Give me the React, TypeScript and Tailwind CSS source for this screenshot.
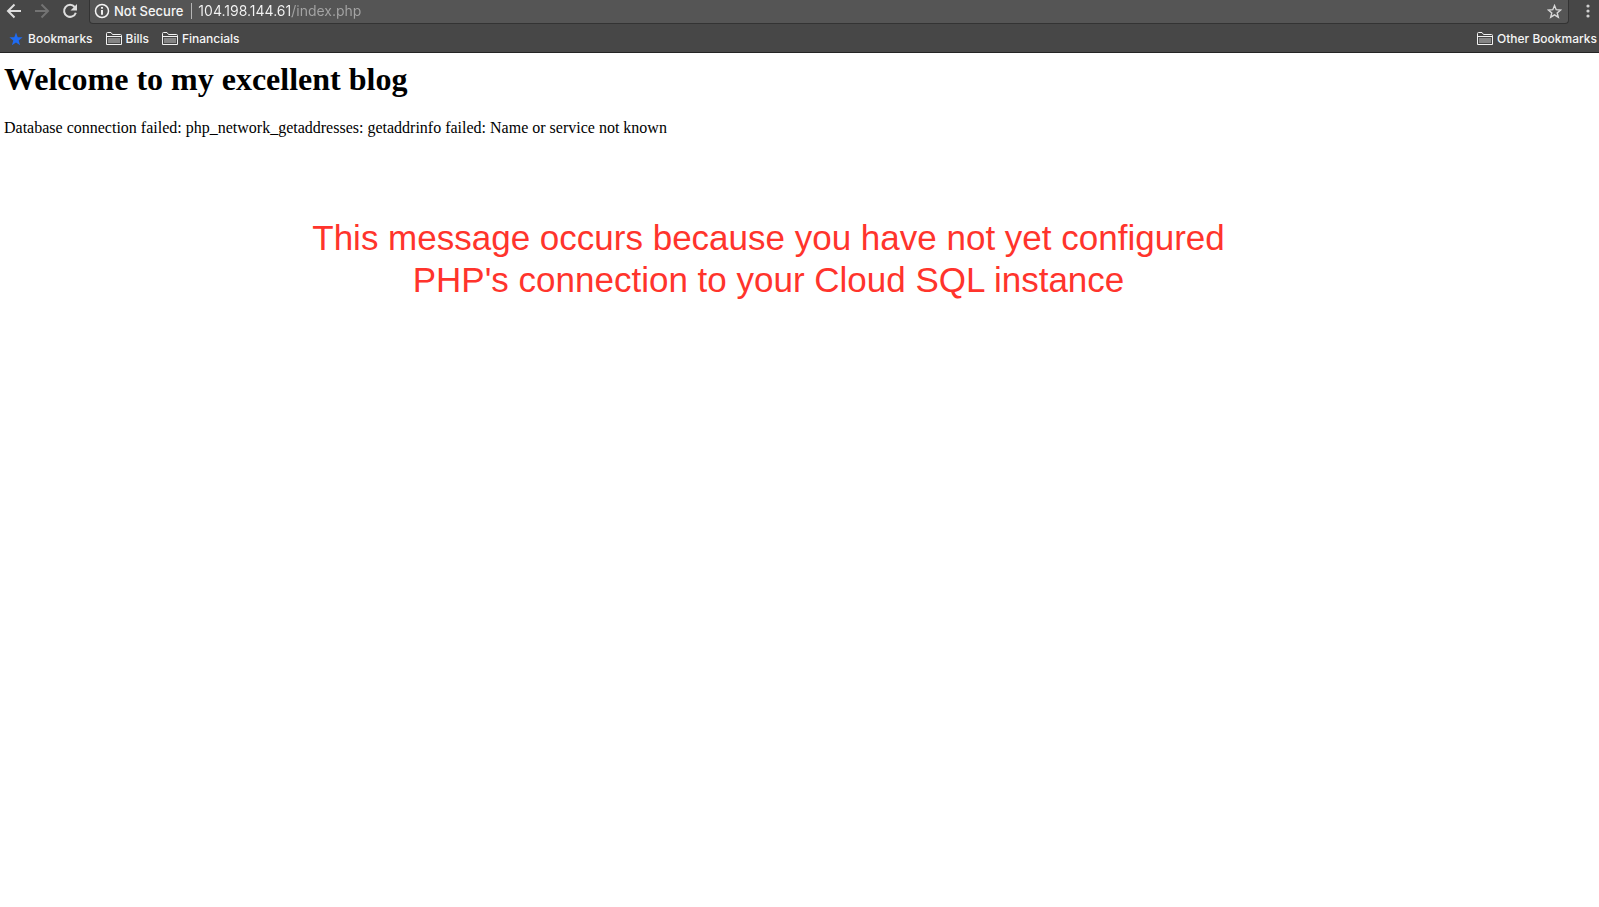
import type { ReactNode } from "react";

function FolderIcon() {
  return (
    <svg width="16" height="14" viewBox="0 0 16 14" fill="none" aria-hidden="true">
      <path d="M.5 12.500V1.500Q.5.5 1.500.5H5l1.500 2h8q1 0 1 1v9z" fill="#474747" stroke="#f2f2f2" />
      <path d="M2 6h12v5H2z" fill="#858585" />
      <path d="M1 4.500h14" stroke="#f2f2f2" />
    </svg>
  );
}

function Bookmark({ icon, children }: { icon: ReactNode; children: ReactNode }) {
  return (
    <button type="button" className="flex items-center gap-1 whitespace-nowrap">
      {icon}
      <span>{children}</span>
    </button>
  );
}

function Toolbar() {
  return (
    <div className="flex h-6 items-start">
      <div className="flex h-[22px] items-center gap-3 pl-1.5 pr-[11px] text-[#dedede]">
        <button type="button" aria-label="Back">
          <svg width="16" height="16" viewBox="0 0 16 16" fill="none" stroke="currentColor" strokeWidth="2">
            <path d="M15 8H2.500M8.500 1.500 2 8l6.500 6.500" />
          </svg>
        </button>
        <button type="button" aria-label="Forward" className="text-[#737373]">
          <svg width="16" height="16" viewBox="0 0 16 16" fill="none" stroke="currentColor" strokeWidth="2">
            <path d="M1 8h12.500M7.500 1.500 14 8l-6.500 6.500" />
          </svg>
        </button>
        <button type="button" aria-label="Reload">
          <svg width="16" height="16" viewBox="0 0 16 16" fill="none">
            <path d="M12.700 4A6 6 0 1 0 13.800 9.700" stroke="currentColor" strokeWidth="2" />
            <path d="M15 1v6.500H8.500z" fill="currentColor" />
          </svg>
        </button>
      </div>
      <div className="flex h-6 min-w-0 flex-1 items-start rounded-b-sm border-x border-b border-[#333] bg-[#555] pl-1 pr-1.5">
        <div className="flex h-[22px] min-w-0 flex-1 items-center text-sm">
          <button type="button" className="flex shrink-0 items-center gap-1 text-[13px] font-medium text-[#f5f5f5]">
            <svg width="16" height="16" viewBox="0 0 15 15" fill="none" aria-hidden="true">
              <circle cx="7.500" cy="7.500" r="6.100" stroke="currentColor" strokeWidth="1.400" />
              <path d="M7.500 6.500V11M7.500 3.800v1.600" stroke="currentColor" strokeWidth="1.800" />
            </svg>
            <span>Not Secure</span>
          </button>
          <span className="ml-2 mr-1.5 h-4 w-px shrink-0 bg-[#b5b5b5]" />
          <input
            aria-label="Address"
            type="text"
            defaultValue="104.198.144.61/index.php"
            className="h-5 min-w-0 flex-1 bg-linear-to-r from-[#f5f5f5] from-[94px] to-[#a5a5a5] to-[94px] bg-clip-text text-transparent outline-none"
          />
        </div>
        <button type="button" aria-label="Bookmark this page" className="flex h-[22px] items-center text-[#d8d8d8]">
          <svg width="15" height="15" viewBox="0 0 15 15" fill="none" stroke="currentColor" strokeWidth="1.400">
            <path d="m7.500 1.600 1.700 4.100 4.400.3-3.400 2.900 1.100 4.300-3.800-2.400-3.800 2.400 1.100-4.300L1.400 6l4.400-.3z" />
          </svg>
        </button>
      </div>
      <button type="button" aria-label="Menu" className="flex h-[22px] w-[30px] items-center justify-center pl-2 text-[#d0d0d0]">
        <svg width="4" height="14" viewBox="0 0 4 14" fill="currentColor">
          <circle cx="2" cy="2" r="1.600" />
          <circle cx="2" cy="7" r="1.600" />
          <circle cx="2" cy="12" r="1.600" />
        </svg>
      </button>
    </div>
  );
}

function BookmarksBar() {
  return (
    <div className="flex h-7 items-center justify-between pl-2 pr-0.5 pt-0.5 text-xs font-medium text-[#f5f5f5]">
      <div className="flex items-center gap-[13px]">
        <Bookmark
          icon={
            <svg width="16" height="16" viewBox="0 0 16 16" fill="#1f6bf2" aria-hidden="true">
              <path d="m8 1.500 1.700 4.700 4.900.1-3.900 3.100 1.400 4.900L8 11.500l-4.100 2.800 1.400-4.900L1.400 6.300l4.900-.1z" />
            </svg>
          }
        >
          Bookmarks
        </Bookmark>
        <Bookmark icon={<FolderIcon />}>Bills</Bookmark>
        <Bookmark icon={<FolderIcon />}>Financials</Bookmark>
      </div>
      <Bookmark icon={<FolderIcon />}>Other Bookmarks</Bookmark>
    </div>
  );
}

export default function App() {
  return (
    <div className="min-h-screen bg-white text-black">
      <header className="border-b border-[#242424] bg-[#474747] font-['Inter',sans-serif]">
        <Toolbar />
        <BookmarksBar />
      </header>
      <main className="px-1 pt-2 font-['Liberation_Serif',serif]">
        <h1 className="text-[32px] leading-9 font-bold">Welcome to my excellent blog</h1>
        <p className="mt-5 text-base leading-[22px]">
          Database connection failed: php_network_getaddresses: getaddrinfo failed: Name or service not known
        </p>
        <p className="mt-[78px] pr-[62px] text-center font-['Liberation_Sans',sans-serif] text-[35px] leading-[42px] text-[#ff342c]">
          This message occurs because you have not yet configured
          <br />
          PHP's connection to your Cloud SQL instance
        </p>
      </main>
    </div>
  );
}
